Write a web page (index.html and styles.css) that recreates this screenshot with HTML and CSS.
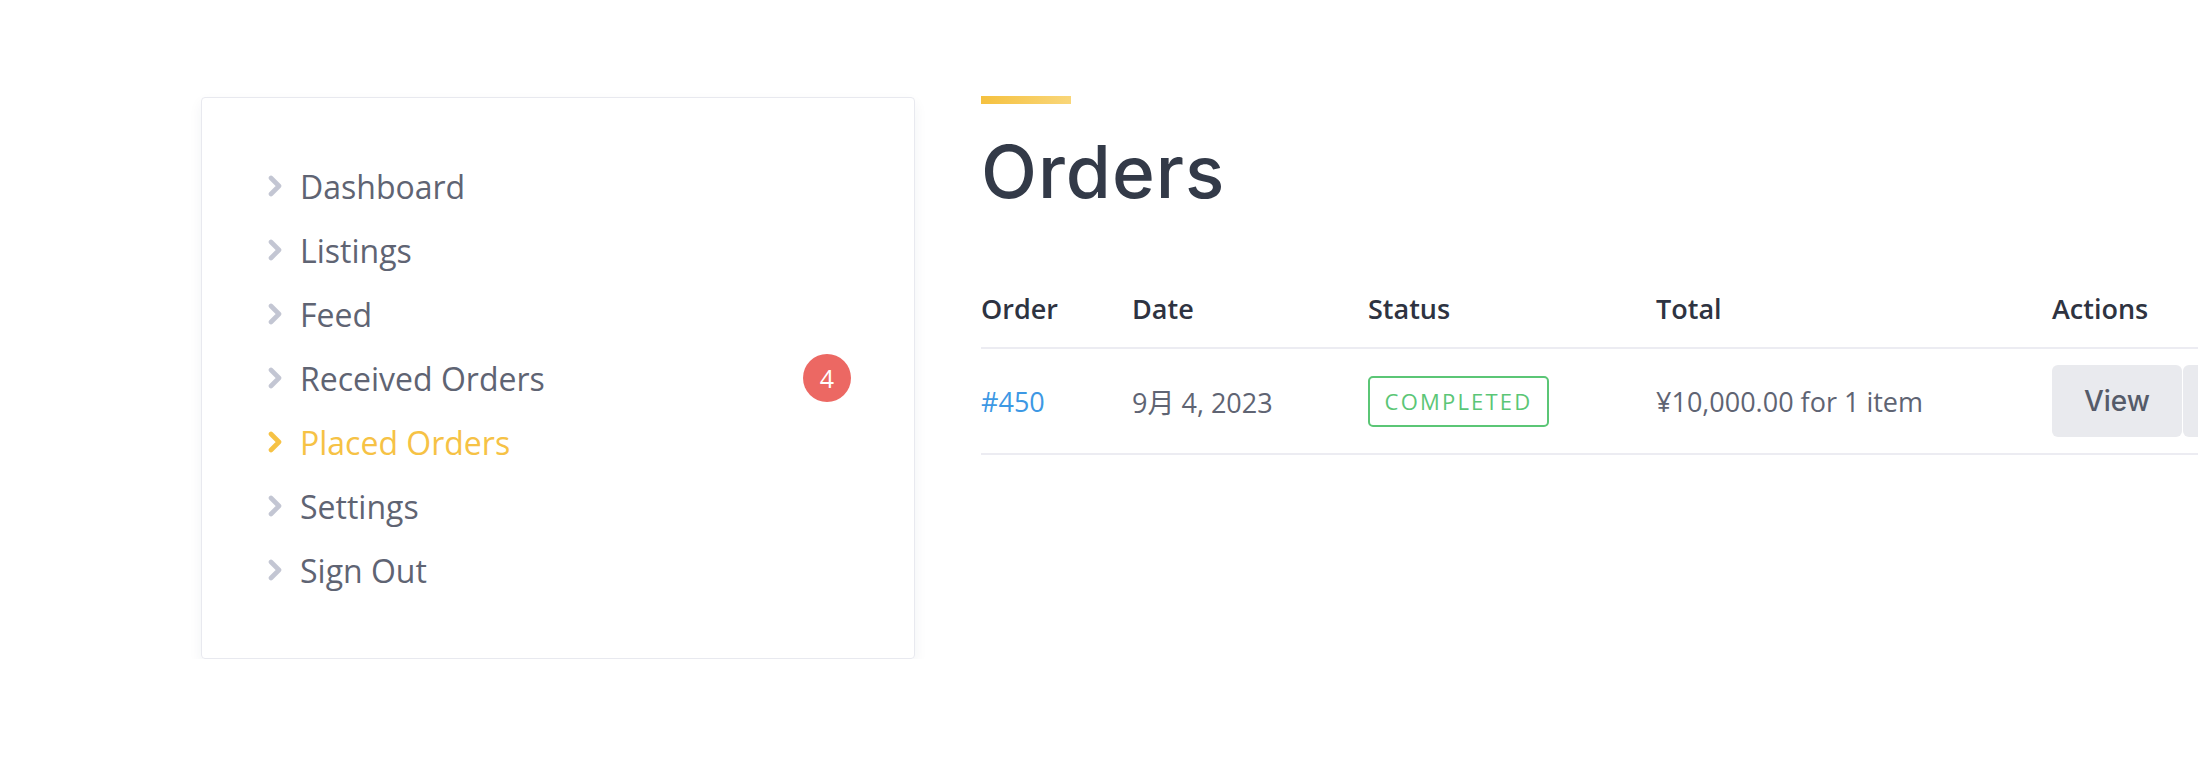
FILE: index.html
```html
<!DOCTYPE html>
<html lang="en">
<head>
  <meta charset="UTF-8" />
  <meta name="viewport" content="width=device-width, initial-scale=1" />
  <title>My Account - Orders</title>
  <link rel="stylesheet" href="styles.css">
</head>
<body>
  <div class="page">
    <nav class="account-nav">
      <ul>
        <li><a href="#"><svg class="chev" viewBox="0 0 14 22"><polyline points="3,3 11,11 3,19" /></svg>Dashboard</a></li>
        <li><a href="#"><svg class="chev" viewBox="0 0 14 22"><polyline points="3,3 11,11 3,19" /></svg>Listings</a></li>
        <li><a href="#"><svg class="chev" viewBox="0 0 14 22"><polyline points="3,3 11,11 3,19" /></svg>Feed</a></li>
        <li><a href="#"><svg class="chev" viewBox="0 0 14 22"><polyline points="3,3 11,11 3,19" /></svg>Received Orders<span class="count">4</span></a></li>
        <li class="active"><a href="#"><svg class="chev" viewBox="0 0 14 22"><polyline points="3,3 11,11 3,19" /></svg>Placed Orders</a></li>
        <li><a href="#"><svg class="chev" viewBox="0 0 14 22"><polyline points="3,3 11,11 3,19" /></svg>Settings</a></li>
        <li><a href="#"><svg class="chev" viewBox="0 0 14 22"><polyline points="3,3 11,11 3,19" /></svg>Sign Out</a></li>
      </ul>
    </nav>

    <main class="orders">
      <div class="title-bar"></div>
      <h1>Orders</h1>

      <table class="orders-table">
        <colgroup>
          <col style="width:151px">
          <col style="width:236px">
          <col style="width:288px">
          <col style="width:396px">
          <col>
        </colgroup>
        <thead>
          <tr>
            <th>Order</th>
            <th>Date</th>
            <th>Status</th>
            <th>Total</th>
            <th>Actions</th>
          </tr>
        </thead>
        <tbody>
          <tr>
            <td><a class="order-link" href="#">#450</a></td>
            <td>9月 4, 2023</td>
            <td><span class="status">COMPLETED</span></td>
            <td>¥10,000.00 for 1 item</td>
            <td>
              <div class="actions">
                <a class="btn" href="#">View</a>
                <a class="btn" href="#" aria-label="Pay"></a>
              </div>
            </td>
          </tr>
        </tbody>
      </table>
    </main>
  </div>
</body>
</html>
```

FILE: styles.css
```css
body {
  margin: 0;
  background: #fff;
  font-family: "Open Sans", "Noto Sans CJK JP", sans-serif;
  color: #5f6473;
  overflow: hidden;
}
a {
  text-decoration: none;
  color: inherit;
}
.page {
  display: flex;
  align-items: flex-start;
  gap: 66px;
  padding: 96px 0 0 201px;
}

/* sidebar */
.account-nav {
  flex: 0 0 714px;
  box-sizing: border-box;
  margin-top: 1px;
  padding: 56px 63px 56px 66px;
  border: 1px solid #e8e9ef;
  border-radius: 4px;
  box-shadow: 0 6px 14px rgba(40, 50, 90, 0.06);
}
.account-nav ul {
  list-style: none;
  margin: 0;
  padding: 0;
}
.account-nav a {
  display: flex;
  align-items: center;
  height: 64px;
  font-size: 32px;
  color: #5f6473;
}
.chev {
  width: 14px;
  height: 22px;
  margin-right: 18px;
  fill: none;
  stroke: #c3c6d3;
  stroke-width: 4.6;
  stroke-linecap: round;
  stroke-linejoin: round;
}
.account-nav .active a {
  color: #f6c245;
}
.account-nav .active .chev {
  stroke: #f6c245;
}
.count {
  margin-left: auto;
  width: 48px;
  height: 48px;
  border-radius: 50%;
  background: #ec6863;
  color: #fff;
  font-size: 25px;
  display: flex;
  align-items: center;
  justify-content: center;
}

/* main */
.orders {
  flex: 0 0 1400px;
}
.title-bar {
  width: 90px;
  height: 8px;
  background: linear-gradient(to right, #f5c13f, #f9d679);
}
h1 {
  margin: 32px 0 63px;
  font-family: Inter, "Open Sans", sans-serif;
  font-weight: 500;
  font-size: 73px;
  line-height: 72px;
  letter-spacing: 1px;
  color: #333a48;
}
.orders-table {
  width: 1400px;
  table-layout: fixed;
  border-collapse: collapse;
  font-size: 27px;
}
.orders-table th {
  text-align: left;
  font-weight: 600;
  color: #2e3341;
  line-height: 40px;
  padding: 18px 0 18px;
  border-bottom: 2px solid #ececf2;
}
.orders-table td {
  padding: 16px 0;
  border-bottom: 2px solid #ececf2;
  vertical-align: middle;
  white-space: nowrap;
  color: #5f6473;
}
.order-link {
  color: #3d98e4;
}
.status {
  display: inline-block;
  box-sizing: border-box;
  width: 181px;
  height: 51px;
  line-height: 47px;
  border: 2px solid #5bc676;
  border-radius: 5px;
  color: #5bc676;
  font-size: 22px;
  letter-spacing: 2.2px;
  text-align: center;
}
.actions {
  display: flex;
  gap: 1px;
}
.btn {
  display: inline-flex;
  align-items: center;
  justify-content: center;
  width: 130px;
  height: 72px;
  border-radius: 6px;
  background: #e9eaee;
  color: #555b69;
  font-family: Inter, "Open Sans", sans-serif;
  font-weight: 500;
  font-size: 28px;
}
```
